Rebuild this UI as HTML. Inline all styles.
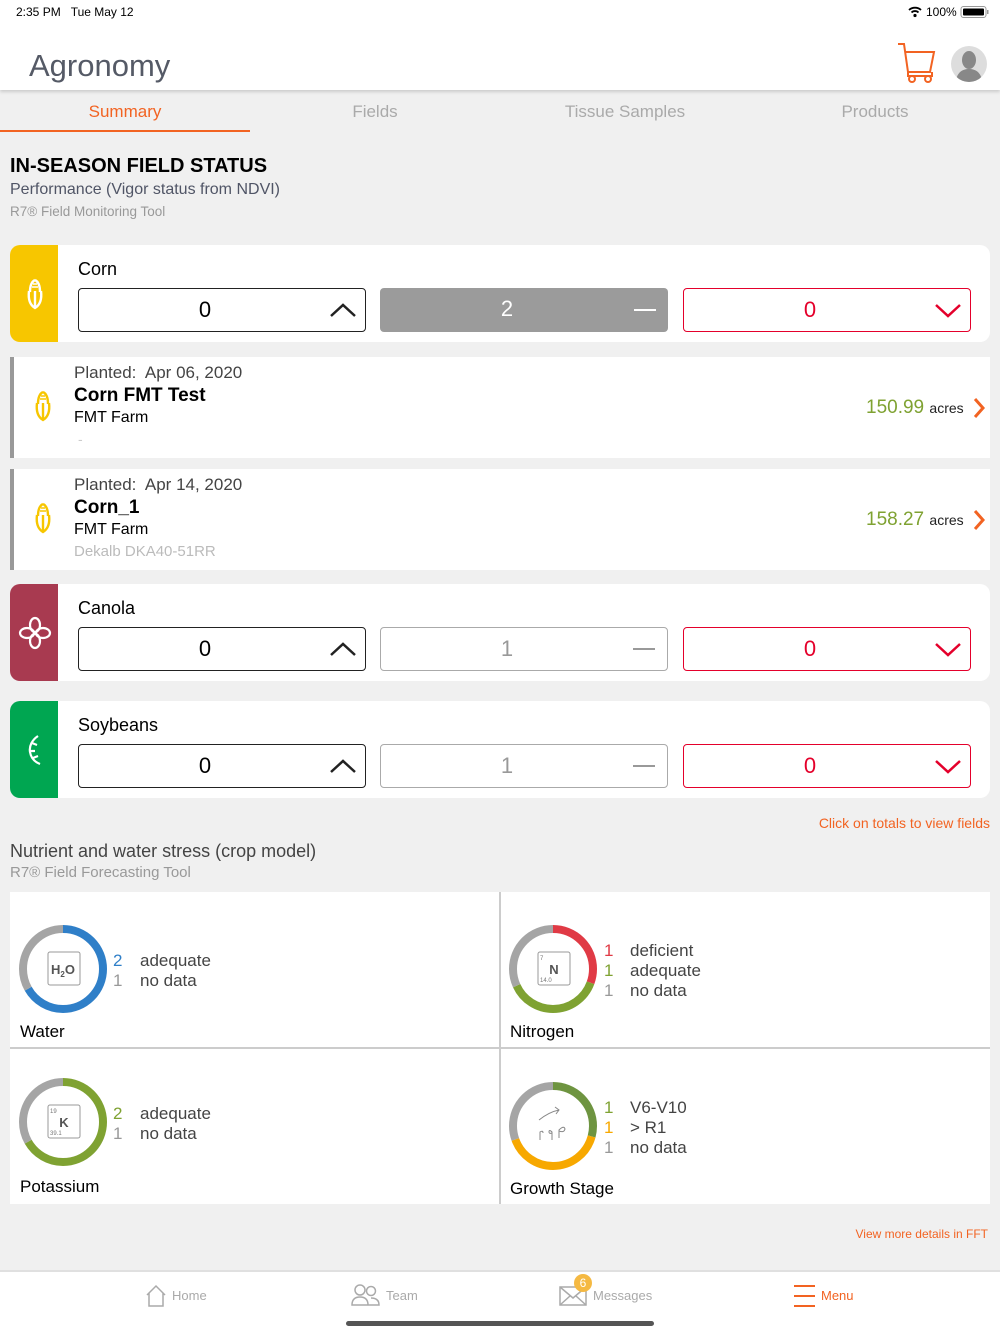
<!DOCTYPE html>
<html><head><meta charset="utf-8"><style>
*{margin:0;padding:0;box-sizing:border-box}
body{width:1000px;height:1334px;background:#f0f0f0;font-family:"Liberation Sans",sans-serif;position:relative;overflow:hidden}
.a{position:absolute}
.t{white-space:nowrap}
.card{position:absolute;left:10px;width:980px;background:#fff;border-radius:10px;overflow:hidden}
.crop{position:absolute;left:0;top:0;width:48px;height:100%}
.box{position:absolute;height:44px;border-radius:4px;font-size:22px;text-align:center;line-height:42px;padding-right:34px}
.row{position:absolute;left:10px;width:980px;height:101px;background:#fff;border-left:4px solid #999}
.g{color:#999}
.num{position:absolute;font-size:17px}
.lab{position:absolute;font-size:17px;color:#444}
</style></head><body>
<div class="a" style="left:0;top:0;width:1000px;height:90px;background:#fff;box-shadow:0 2px 3px rgba(0,0,0,.15)"></div>
<div class="a t" style="left:16px;top:5px;font-size:12px;color:#000">2:35 PM&nbsp;&nbsp;&nbsp;Tue May 12</div>
<svg class="a" style="left:906px;top:5px" width="90" height="14"><path d="M3 5a9 9 0 0 1 12 0M5.5 7.5a5 5 0 0 1 7 0" stroke="#000" stroke-width="1.8" fill="none"/><circle cx="9" cy="10.5" r="1.6"/><text x="20" y="11" font-size="12" font-family="Liberation Sans">100%</text><rect x="55" y="1.5" width="25" height="11" rx="2.5" fill="none" stroke="#999"/><rect x="57" y="3.5" width="21" height="7" rx="1" fill="#000"/><rect x="81" y="5" width="1.5" height="4" fill="#999"/></svg>
<div class="a t" style="left:29px;top:48px;font-size:31px;color:#555a66;font-weight:300">Agronomy</div>
<svg class="a" style="left:896px;top:42px" width="42" height="42" fill="none" stroke="#f26322" stroke-width="2"><path d="M2 2h6l4 28h22l4-20H10"/><path d="M12 30v4h24v-4"/><circle cx="16" cy="37" r="3"/><circle cx="32" cy="37" r="3"/></svg>
<svg class="a" style="left:950px;top:45px" width="38" height="38"><circle cx="19" cy="19" r="18" fill="#ddd"/><clipPath id="c"><circle cx="19" cy="19" r="18"/></clipPath><g clip-path="url(#c)" fill="#888"><ellipse cx="19" cy="15" rx="7" ry="9"/><path d="M6 38c0-10 6-14 13-14s13 4 13 14z"/></g></svg>
<div class="a t" style="left:0;top:102px;width:250px;text-align:center;font-size:17px;color:#f26322">Summary</div>
<div class="a" style="left:0;top:130px;width:250px;height:2px;background:#f26322"></div>
<div class="a t" style="left:250px;top:102px;width:250px;text-align:center;font-size:17px;color:#aaa">Fields</div>
<div class="a t" style="left:500px;top:102px;width:250px;text-align:center;font-size:17px;color:#aaa">Tissue Samples</div>
<div class="a t" style="left:750px;top:102px;width:250px;text-align:center;font-size:17px;color:#aaa">Products</div>
<div class="a t" style="left:10px;top:155px;font-size:20px;font-weight:bold;color:#000">IN-SEASON FIELD STATUS</div>
<div class="a t" style="left:10px;top:181px;font-size:16px;color:#505566">Performance (Vigor status from NDVI)</div>
<div class="a t" style="left:10px;top:204px;font-size:13.5px;color:#999">R7® Field Monitoring Tool</div>

<div class="card" style="top:245px;height:97px">
 <div class="crop" style="background:#f7c600"></div>
 <svg class="a" style="left:14px;top:32px" width="22" height="34" fill="none" stroke="#fff" stroke-width="2.4"><path d="M11 3c-4 2-5 7-5 12M11 3c4 2 5 7 5 12M5 14c-1 8 1 14 6 17 5-3 7-9 6-17M11 14v17"/><path d="M9 7h4M8 10h6" stroke-width="1.5"/></svg>
 <div class="a t" style="left:68px;top:14px;font-size:18px">Corn</div>
 <div class="box" style="left:68px;top:43px;width:288px;border:1.5px solid #222">0<svg class="a" style="right:8px;top:13px" width="28" height="16" fill="none" stroke="#222" stroke-width="2.5"><path d="M2 14L14 3l12 11"/></svg></div>
 <div class="box" style="left:370px;top:43px;width:288px;background:#9b9b9b;color:#fff">2<div class="a" style="right:12px;top:21px;width:22px;height:2px;background:#fff"></div></div>
 <div class="box" style="left:673px;top:43px;width:288px;border:1.5px solid #e4002b;color:#e4002b">0<svg class="a" style="right:8px;top:14px" width="28" height="16" fill="none" stroke="#e4002b" stroke-width="2.5"><path d="M2 2l12 11 12-11"/></svg></div>
</div>
<div class="row" style="top:357px">
 <svg class="a" style="left:18px;top:32px" width="22" height="34" fill="none" stroke="#f7c600" stroke-width="2.4"><path d="M11 3c-4 2-5 7-5 12M11 3c4 2 5 7 5 12M5 14c-1 8 1 14 6 17 5-3 7-9 6-17M11 14v17"/><path d="M9 7h4M8 10h6" stroke-width="1.5"/></svg>
 <div class="a t" style="left:60px;top:6px;font-size:17px;color:#444">Planted:&nbsp; Apr 06, 2020</div>
 <div class="a t" style="left:60px;top:28px;font-size:19px;color:#000;font-weight:bold">Corn FMT Test</div>
 <div class="a t" style="left:60px;top:52px;font-size:16px;color:#000">FMT Farm</div>
 <div class="a t" style="left:64px;top:74px;font-size:14px;color:#ccc">-</div>
 <div class="a t" style="left:852px;top:40px;font-size:19px;color:#7fa232">150.99 <span style="font-size:14px;color:#222">acres</span></div>
 <svg class="a" style="left:958px;top:40px" width="14" height="22" fill="none" stroke="#f26322" stroke-width="3"><path d="M3 2l8 9-8 9"/></svg>
</div>
<div class="row" style="top:469px">
 <svg class="a" style="left:18px;top:32px" width="22" height="34" fill="none" stroke="#f7c600" stroke-width="2.4"><path d="M11 3c-4 2-5 7-5 12M11 3c4 2 5 7 5 12M5 14c-1 8 1 14 6 17 5-3 7-9 6-17M11 14v17"/><path d="M9 7h4M8 10h6" stroke-width="1.5"/></svg>
 <div class="a t" style="left:60px;top:6px;font-size:17px;color:#444">Planted:&nbsp; Apr 14, 2020</div>
 <div class="a t" style="left:60px;top:28px;font-size:19px;color:#000;font-weight:bold">Corn_1</div>
 <div class="a t" style="left:60px;top:52px;font-size:16px;color:#000">FMT Farm</div>
 <div class="a t" style="left:60px;top:74px;font-size:15px;color:#bbb">Dekalb DKA40-51RR</div>
 <div class="a t" style="left:852px;top:40px;font-size:19px;color:#7fa232">158.27 <span style="font-size:14px;color:#222">acres</span></div>
 <svg class="a" style="left:958px;top:40px" width="14" height="22" fill="none" stroke="#f26322" stroke-width="3"><path d="M3 2l8 9-8 9"/></svg>
</div>
<div class="card" style="top:584px;height:97px">
 <div class="crop" style="background:#a83a50"></div>
 <svg class="a" style="left:8px;top:32px" width="34" height="34" fill="none" stroke="#fff" stroke-width="2.2"><ellipse cx="17" cy="9" rx="5" ry="7"/><ellipse cx="17" cy="25" rx="5" ry="7"/><ellipse cx="9" cy="17" rx="7" ry="5"/><ellipse cx="25" cy="17" rx="7" ry="5"/></svg>
 <div class="a t" style="left:68px;top:14px;font-size:18px">Canola</div>
 <div class="box" style="left:68px;top:43px;width:288px;border:1.5px solid #222">0<svg class="a" style="right:8px;top:13px" width="28" height="16" fill="none" stroke="#222" stroke-width="2.5"><path d="M2 14L14 3l12 11"/></svg></div>
 <div class="box" style="left:370px;top:43px;width:288px;border:1.5px solid #aaa;color:#999">1<div class="a" style="right:12px;top:20px;width:22px;height:2px;background:#999"></div></div>
 <div class="box" style="left:673px;top:43px;width:288px;border:1.5px solid #e4002b;color:#e4002b">0<svg class="a" style="right:8px;top:14px" width="28" height="16" fill="none" stroke="#e4002b" stroke-width="2.5"><path d="M2 2l12 11 12-11"/></svg></div>
</div>
<div class="card" style="top:701px;height:97px">
 <div class="crop" style="background:#00a651"></div>
 <svg class="a" style="left:16px;top:32px" width="20" height="34" fill="none" stroke="#fff" stroke-width="2.2"><path d="M12 3c-6 4-9 10-8 16 1 6 5 10 10 12"/><path d="M6 10l5 2M4 18h5M7 25l5-2"/></svg>
 <div class="a t" style="left:68px;top:14px;font-size:18px">Soybeans</div>
 <div class="box" style="left:68px;top:43px;width:288px;border:1.5px solid #222">0<svg class="a" style="right:8px;top:13px" width="28" height="16" fill="none" stroke="#222" stroke-width="2.5"><path d="M2 14L14 3l12 11"/></svg></div>
 <div class="box" style="left:370px;top:43px;width:288px;border:1.5px solid #aaa;color:#999">1<div class="a" style="right:12px;top:20px;width:22px;height:2px;background:#999"></div></div>
 <div class="box" style="left:673px;top:43px;width:288px;border:1.5px solid #e4002b;color:#e4002b">0<svg class="a" style="right:8px;top:14px" width="28" height="16" fill="none" stroke="#e4002b" stroke-width="2.5"><path d="M2 2l12 11 12-11"/></svg></div>
</div>
<div class="a t" style="right:10px;top:815px;font-size:14px;color:#f26322">Click on totals to view fields</div>
<div class="a t" style="left:10px;top:841px;font-size:18px;color:#444">Nutrient and water stress (crop model)</div>
<div class="a t" style="left:10px;top:864px;font-size:15px;color:#999">R7® Field Forecasting Tool</div>

<div class="a" style="left:10px;top:892px;width:980px;height:312px;background:#fff"></div>
<div class="a" style="left:499px;top:892px;width:2px;height:312px;background:#ccc"></div>
<div class="a" style="left:10px;top:1047px;width:980px;height:2px;background:#ccc"></div>

<svg class="a" style="left:19px;top:925px" width="88" height="88"><g transform="rotate(-90 44 44)" fill="none" stroke-width="8"><circle cx="44" cy="44" r="40" stroke="#2f7fc8" stroke-dasharray="167.6 300"/><circle cx="44" cy="44" r="40" stroke="#a5a5a5" stroke-dasharray="83.8 300" stroke-dashoffset="-167.6"/></g><rect x="29" y="27" width="32" height="33" rx="2" fill="none" stroke="#999"/><text x="44" y="49" text-anchor="middle" font-size="13" font-weight="bold" fill="#555" font-family="Liberation Sans">H<tspan font-size="8" dy="3">2</tspan><tspan dy="-3">O</tspan></text></svg>
<div class="num" style="left:113px;top:951px;color:#2f7fc8">2</div><div class="lab" style="left:140px;top:951px">adequate</div>
<div class="num g" style="left:113px;top:971px">1</div><div class="lab" style="left:140px;top:971px">no data</div>
<div class="a t" style="left:20px;top:1022px;font-size:17px">Water</div>

<svg class="a" style="left:509px;top:925px" width="88" height="88"><g transform="rotate(-90 44 44)" fill="none" stroke-width="8"><circle cx="44" cy="44" r="40" stroke="#e03a45" stroke-dasharray="76.8 300"/><circle cx="44" cy="44" r="40" stroke="#7fa232" stroke-dasharray="94.2 300" stroke-dashoffset="-76.8"/><circle cx="44" cy="44" r="40" stroke="#a5a5a5" stroke-dasharray="80.3 300" stroke-dashoffset="-171"/></g><rect x="29" y="27" width="32" height="33" rx="2" fill="none" stroke="#999"/><text x="31" y="35" font-size="6" fill="#777">7</text><text x="45" y="49" text-anchor="middle" font-size="13" font-weight="bold" fill="#555">N</text><text x="31" y="57" font-size="6" fill="#777">14.0</text></svg>
<div class="num" style="left:604px;top:941px;color:#e03a45">1</div><div class="lab" style="left:630px;top:941px">deficient</div>
<div class="num" style="left:604px;top:961px;color:#7fa232">1</div><div class="lab" style="left:630px;top:961px">adequate</div>
<div class="num g" style="left:604px;top:981px">1</div><div class="lab" style="left:630px;top:981px">no data</div>
<div class="a t" style="left:510px;top:1022px;font-size:17px">Nitrogen</div>

<svg class="a" style="left:19px;top:1078px" width="88" height="88"><g transform="rotate(-90 44 44)" fill="none" stroke-width="8"><circle cx="44" cy="44" r="40" stroke="#7fa232" stroke-dasharray="167.6 300"/><circle cx="44" cy="44" r="40" stroke="#a5a5a5" stroke-dasharray="83.8 300" stroke-dashoffset="-167.6"/></g><rect x="29" y="27" width="32" height="33" rx="2" fill="none" stroke="#999"/><text x="31" y="35" font-size="6" fill="#777">19</text><text x="45" y="49" text-anchor="middle" font-size="13" font-weight="bold" fill="#555">K</text><text x="31" y="57" font-size="6" fill="#777">39.1</text></svg>
<div class="num" style="left:113px;top:1104px;color:#7fa232">2</div><div class="lab" style="left:140px;top:1104px">adequate</div>
<div class="num g" style="left:113px;top:1124px">1</div><div class="lab" style="left:140px;top:1124px">no data</div>
<div class="a t" style="left:20px;top:1177px;font-size:17px">Potassium</div>

<svg class="a" style="left:509px;top:1082px" width="88" height="88"><g transform="rotate(-90 44 44)" fill="none" stroke-width="8"><circle cx="44" cy="44" r="40" stroke="#6e9440" stroke-dasharray="73.3 300"/><circle cx="44" cy="44" r="40" stroke="#f7a800" stroke-dasharray="101.2 300" stroke-dashoffset="-73.3"/><circle cx="44" cy="44" r="40" stroke="#a5a5a5" stroke-dasharray="76.8 300" stroke-dashoffset="-174.5"/></g><g fill="none" stroke="#888" stroke-width="1"><path d="M30 38q10-8 20-10M46 25l4 3-3 4"/><path d="M31 58v-8q3-2 3 1M43 58v-8q-3-3-3 0q0 2 3 1M50 56v-8q5-5 6-1q-1 4-6 2"/></g></svg>
<div class="num" style="left:604px;top:1098px;color:#7fa232">1</div><div class="lab" style="left:630px;top:1098px">V6-V10</div>
<div class="num" style="left:604px;top:1118px;color:#f7a800">1</div><div class="lab" style="left:630px;top:1118px">&gt; R1</div>
<div class="num g" style="left:604px;top:1138px">1</div><div class="lab" style="left:630px;top:1138px">no data</div>
<div class="a t" style="left:510px;top:1179px;font-size:17px">Growth Stage</div>

<div class="a t" style="right:12px;top:1227px;font-size:12px;color:#f26322">View more details in FFT</div>

<div class="a" style="left:0;top:1270px;width:1000px;height:64px;background:#fff;border-top:2px solid #e0e0e0"></div>
<svg class="a" style="left:145px;top:1284px" width="22" height="24" fill="none" stroke="#aaa" stroke-width="1.5"><path d="M2 11L11 2l9 9M4 9v13h14V9"/></svg>
<div class="a t" style="left:172px;top:1288px;font-size:13px;color:#aaa">Home</div>
<svg class="a" style="left:351px;top:1283px" width="30" height="24" fill="none" stroke="#aaa" stroke-width="1.5"><circle cx="9" cy="7" r="5"/><circle cx="20" cy="8" r="4.5"/><path d="M1 22q0-8 8-8t8 8zM15 22h13q0-7-8-7"/></svg>
<div class="a t" style="left:386px;top:1288px;font-size:13px;color:#aaa">Team</div>
<svg class="a" style="left:559px;top:1286px" width="28" height="20" fill="none" stroke="#aaa" stroke-width="1.5"><rect x="1" y="1" width="26" height="18"/><path d="M1 1l13 11L27 1M1 19l10-9M27 19l-10-9"/></svg>
<div class="a" style="left:574px;top:1274px;width:18px;height:18px;border-radius:50%;background:#f5b942;color:#fff;font-size:12px;text-align:center;line-height:18px">6</div>
<div class="a t" style="left:593px;top:1288px;font-size:13px;color:#aaa">Messages</div>
<div class="a" style="left:794px;top:1285px;width:21px;height:2px;background:#f26322"></div>
<div class="a" style="left:794px;top:1295px;width:21px;height:2px;background:#f26322"></div>
<div class="a" style="left:794px;top:1305px;width:21px;height:2px;background:#f26322"></div>
<div class="a t" style="left:821px;top:1288px;font-size:13px;color:#f26322">Menu</div>
<div class="a" style="left:346px;top:1321px;width:308px;height:5px;border-radius:3px;background:#555"></div>
</body></html>
